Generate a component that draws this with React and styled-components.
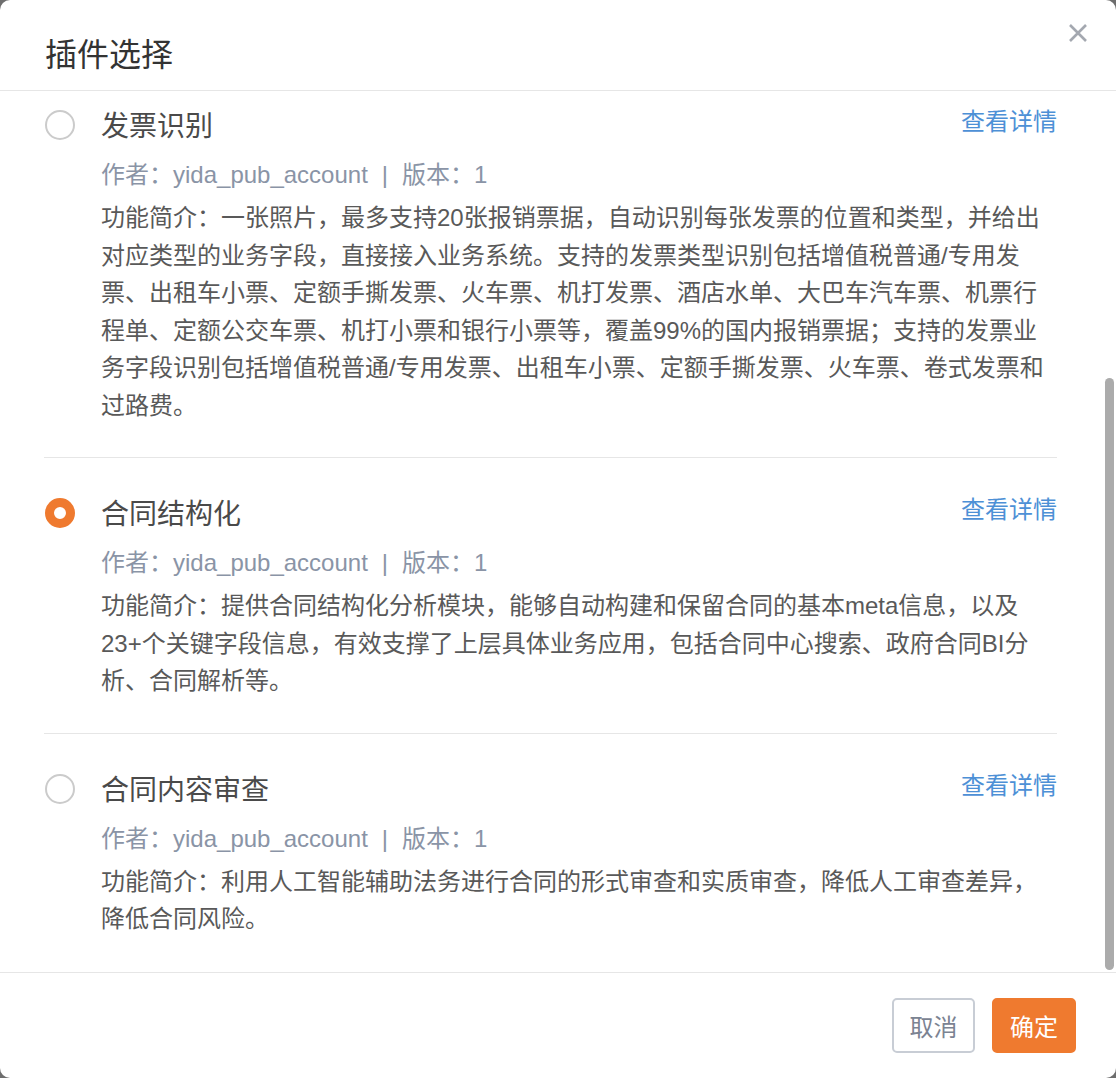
import React, { useLayoutEffect, useRef } from 'react'
import styled, { createGlobalStyle } from 'styled-components'

const GlobalStyle = createGlobalStyle`
  html, body {
    margin: 0;
    padding: 0;
  }
  body {
    background: #6e6e6e;
    font-family: "Liberation Sans", "Noto Sans CJK SC", sans-serif;
  }
  * {
    box-sizing: border-box;
  }
`

const Modal = styled.div`
  width: 1116px;
  height: 1078px;
  background: #fff;
  border-radius: 10px;
  overflow: hidden;
  display: flex;
  flex-direction: column;
`

const Header = styled.div`
  height: 91px;
  flex-shrink: 0;
  display: flex;
  justify-content: space-between;
  align-items: flex-start;
  padding: 0 29px 0 45px;
  border-bottom: 1px solid #e6e6e6;
`

const Title = styled.h2`
  margin: 39px 0 0;
  font-size: 32px;
  line-height: 32px;
  font-weight: 400;
  color: #333;
`

const CloseButton = styled.button`
  margin-top: 24px;
  width: 18px;
  height: 18px;
  padding: 0;
  border: none;
  background: none;
  cursor: pointer;
  color: #a4a8b0;
  display: flex;
`

const BodyWrap = styled.div`
  position: relative;
  flex: 1;
  min-height: 0;
`

const Body = styled.div`
  height: 100%;
  overflow-y: auto;
  scrollbar-width: none;

  &::-webkit-scrollbar {
    display: none;
  }
`

// overlay scrollbar, the way macOS draws it over the list
const ScrollThumb = styled.div`
  position: absolute;
  right: 2px;
  top: 287px;
  width: 9px;
  height: 592px;
  border-radius: 5px;
  background: #ababab;
  pointer-events: none;
`

const List = styled.div`
  padding: 0 59px 1px 44px;
`

const Item = styled.div`
  display: grid;
  grid-template-columns: 57px 1fr;
  padding: 37px 0 33px;

  & + & {
    border-top: 1px solid #e6e6e6;
  }
`

const Radio = styled.span`
  display: block;
  width: 30px;
  height: 30px;
  margin: 3px 0 0 1px;
  border-radius: 50%;
  background: #fff;
  border: ${p => (p.checked ? '9px solid #ef7a2f' : '2px solid #cbcbcb')};
  cursor: pointer;
`

const Content = styled.div`
  min-width: 0;
`

const HeadRow = styled.div`
  display: flex;
  justify-content: space-between;
  align-items: flex-start;
`

const ItemTitle = styled.div`
  font-size: 28px;
  line-height: 40px;
  color: #4a4a4a;
`

const DetailLink = styled.a`
  font-size: 24px;
  line-height: 30px;
  color: #4d90d6;
  text-decoration: none;
  cursor: pointer;
`

const Meta = styled.div`
  margin-top: 8px;
  font-size: 24px;
  line-height: 40px;
  color: #8a94a6;
`

const Sep = styled.span`
  margin: 0 14px;
`

const Desc = styled.p`
  margin: 4px 6px 0 0;
  font-size: 24px;
  line-height: 37.5px;
  color: #595959;
`

const Footer = styled.div`
  height: 106px;
  flex-shrink: 0;
  display: flex;
  justify-content: flex-end;
  align-items: center;
  gap: 17px;
  padding: 0 40px;
  border-top: 1px solid #e6e6e6;
`

const Button = styled.button`
  width: ${p => (p.primary ? '84px' : '83px')};
  height: 55px;
  border-radius: 5px;
  font-family: inherit;
  font-size: 24px;
  cursor: pointer;
  border: 2px solid ${p => (p.primary ? '#ef7a2f' : '#c8cdd5')};
  background: ${p => (p.primary ? '#ef7a2f' : '#fff')};
  color: ${p => (p.primary ? '#fff' : '#7b8392')};
`

const plugins = [
  {
    id: 'invoice',
    name: '发票识别',
    author: 'yida_pub_account',
    version: 1,
    desc: '功能简介：一张照片，最多支持20张报销票据，自动识别每张发票的位置和类型，并给出对应类型的业务字段，直接接入业务系统。支持的发票类型识别包括增值税普通/专用发票、出租车小票、定额手撕发票、火车票、机打发票、酒店水单、大巴车汽车票、机票行程单、定额公交车票、机打小票和银行小票等，覆盖99%的国内报销票据；支持的发票业务字段识别包括增值税普通/专用发票、出租车小票、定额手撕发票、火车票、卷式发票和过路费。'
  },
  {
    id: 'contract',
    name: '合同结构化',
    author: 'yida_pub_account',
    version: 1,
    desc: '功能简介：提供合同结构化分析模块，能够自动构建和保留合同的基本meta信息，以及23+个关键字段信息，有效支撑了上层具体业务应用，包括合同中心搜索、政府合同BI分析、合同解析等。'
  },
  {
    id: 'review',
    name: '合同内容审查',
    author: 'yida_pub_account',
    version: 1,
    desc: '功能简介：利用人工智能辅助法务进行合同的形式审查和实质审查，降低人工审查差异，降低合同风险。'
  }
]

const CloseIcon = () => (
  <svg width="18" height="18" viewBox="0 0 18 18" fill="none">
    <path d="M1 1L17 17M17 1L1 17" stroke="currentColor" strokeWidth="2.6" />
  </svg>
)

const PluginSelect = () => {
  const bodyRef = useRef(null)
  const selected = 'contract'

  useLayoutEffect(() => {
    if (bodyRef.current) {
      bodyRef.current.scrollTop = bodyRef.current.scrollHeight
    }
  }, [])

  return (
    <Modal>
      <Header>
        <Title>插件选择</Title>
        <CloseButton aria-label="关闭">
          <CloseIcon />
        </CloseButton>
      </Header>
      <BodyWrap>
        <Body ref={bodyRef}>
          <List>
            {plugins.map(p => (
              <Item key={p.id}>
                <Radio checked={p.id === selected} />
                <Content>
                  <HeadRow>
                    <ItemTitle>{p.name}</ItemTitle>
                    <DetailLink>查看详情</DetailLink>
                  </HeadRow>
                  <Meta>
                    作者：{p.author}
                    <Sep>|</Sep>
                    版本：{p.version}
                  </Meta>
                  <Desc>{p.desc}</Desc>
                </Content>
              </Item>
            ))}
          </List>
        </Body>
        <ScrollThumb />
      </BodyWrap>
      <Footer>
        <Button>取消</Button>
        <Button primary>确定</Button>
      </Footer>
    </Modal>
  )
}

export default function App() {
  return (
    <>
      <GlobalStyle />
      <PluginSelect />
    </>
  )
}
